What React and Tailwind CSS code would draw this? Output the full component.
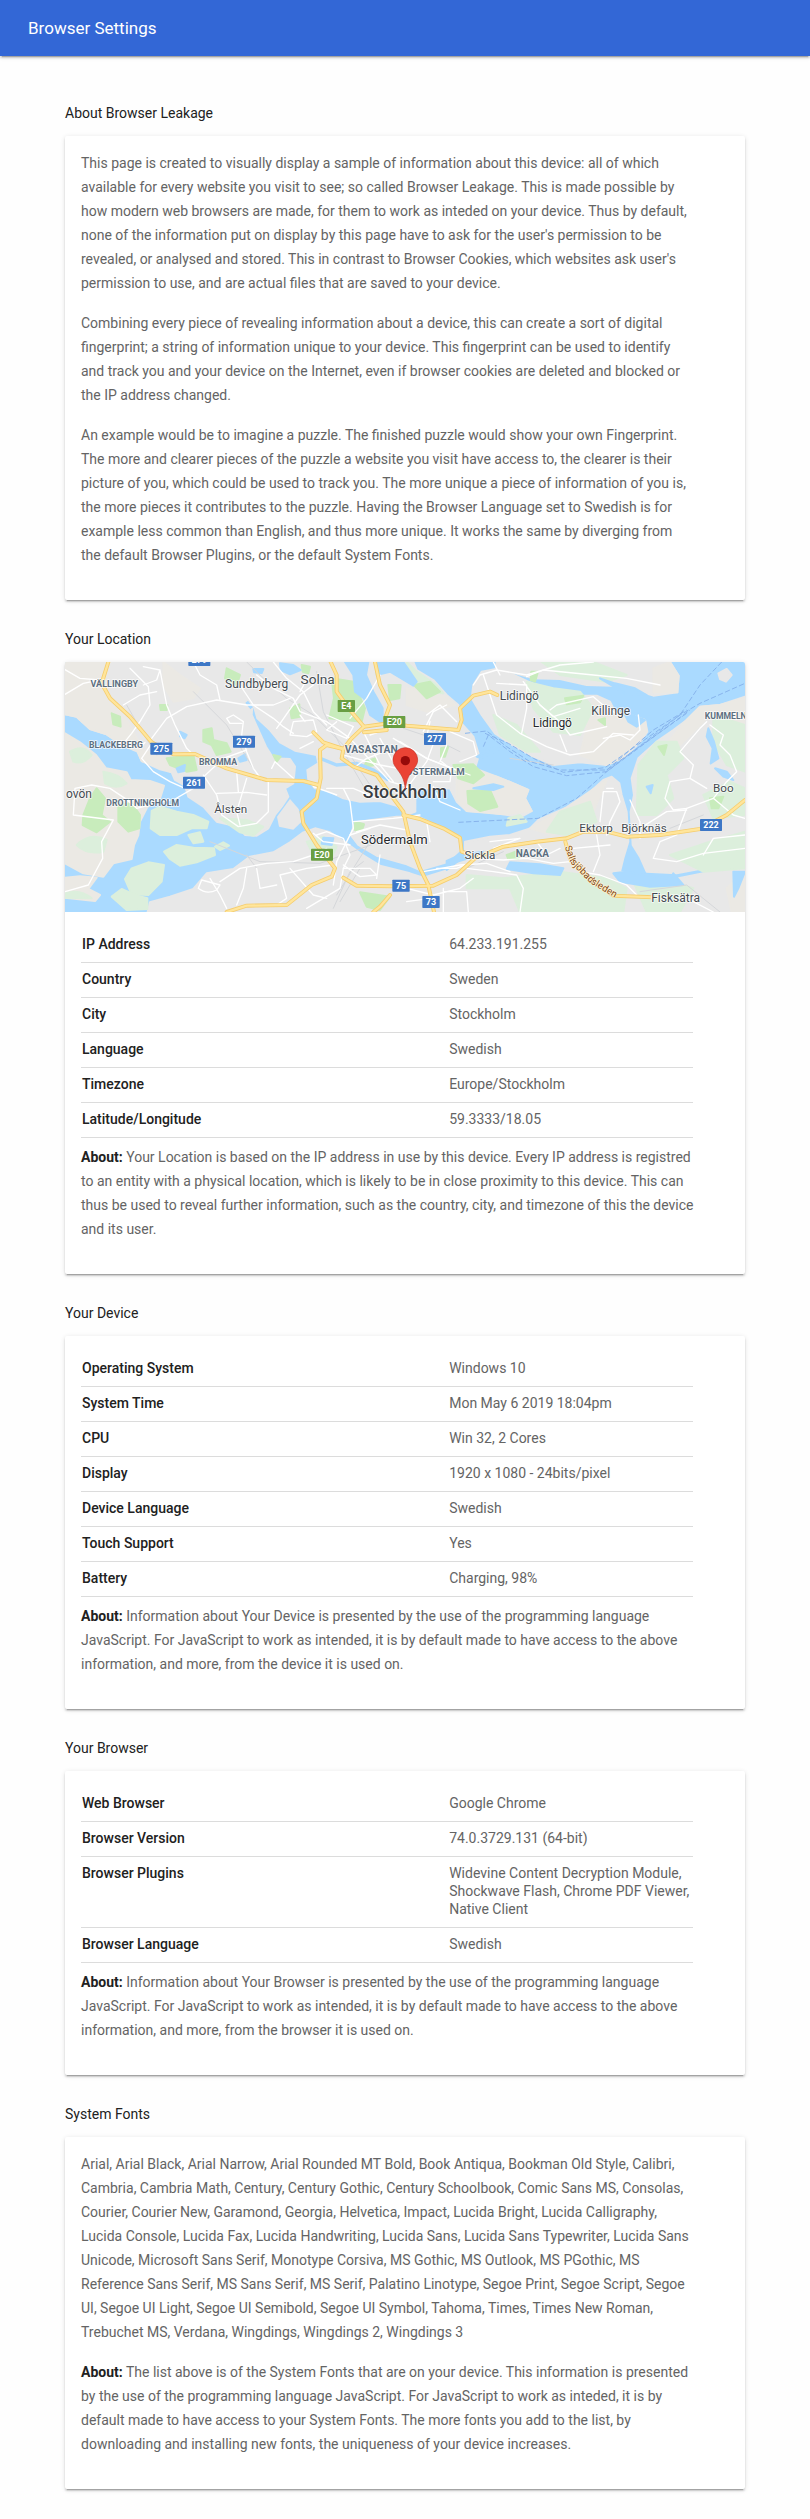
const LAND = [
  // northern mainland
  "M15,21 L1060,21 L1070,45 L1120,75 L1160,120 L1195,150 L1200,200 L1240,245 L1257,300 L1245,340 L1310,365 L1360,385 L1405,405 L1395,430 L1415,468 L1380,487 L1330,478 L1280,472 L1220,468 L1190,440 L1170,400 L1135,402 L1080,398 L1066,425 L1066,470 L1040,480 L1010,452 L960,438 L900,440 L850,430 L800,405 L765,400 L745,375 L742,345 L775,325 L770,300 L705,287 L660,262 L630,225 L592,190 L578,140 L575,180 L600,235 L618,275 L640,310 L690,312 L705,335 L700,385 L675,400 L685,425 L665,455 L645,480 L625,520 L590,542 L555,540 L535,515 L470,500 L430,455 L385,425 L375,392 L345,375 L335,352 L300,343 L245,318 L232,290 L190,272 L140,238 L90,222 L50,185 L15,178Z",
  // Södermalm
  "M885,502 L1010,485 L1075,485 L1150,522 L1198,545 L1205,580 L1160,622 L1080,645 L1040,628 L950,602 L895,570 L872,540Z",
  // southern mainland
  "M263,771 L270,742 L330,725 L400,702 L440,655 L520,642 L570,605 L640,592 L690,562 L730,532 L765,520 L810,532 L860,565 L905,598 L960,632 L1050,655 L1090,668 L1165,645 L1215,612 L1215,560 L1290,545 L1350,540 L1410,520 L1435,495 L1520,457 L1580,420 L1630,375 L1655,365 L1678,385 L1685,420 L1700,470 L1705,560 L1690,610 L1680,650 L1740,665 L1830,675 L1930,655 L2055,640 L2055,771Z",
  // Boo
  "M2055,125 L1980,150 L1920,155 L1880,195 L1840,225 L1790,260 L1735,310 L1715,370 L1722,420 L1712,470 L1718,570 L1740,605 L1760,650 L1850,655 L1930,640 L2055,625Z",
  // Lidingö
  "M1265,50 L1240,90 L1235,130 L1265,180 L1305,235 L1360,272 L1410,300 L1480,330 L1560,322 L1640,330 L1690,308 L1740,262 L1762,230 L1755,195 L1712,180 L1665,170 L1650,140 L1610,122 L1540,122 L1450,100 L1400,78 L1320,40Z",
  "M1310,21 L1830,21 L1856,62 L1852,112 L1780,122 L1720,104 L1660,92 L1580,90 L1500,72 L1420,70 L1350,50 L1305,60Z",
  "M1975,55 L2000,42 L2015,60 L1998,80 L1980,72Z",
];

const ISLANDS = [
  "M15,235 L60,262 L108,300 L138,340 L200,352 L212,375 L270,378 L312,392 L300,430 L262,456 L240,500 L235,540 L222,570 L215,612 L160,625 L130,665 L70,655 L15,625Z",
  "M15,668 L60,664 L110,668 L85,702 L120,720 L105,738 L15,728Z",
];

const GREEN_ISLES = [
  "M275,468 L300,455 L350,470 L400,480 L445,500 L440,520 L395,520 L350,540 L300,540 L272,520Z",
  "M312,590 L350,570 L400,578 L462,580 L465,600 L410,622 L360,632 L330,612Z",
  "M195,672 L215,640 L265,622 L312,630 L305,680 L265,720 L215,718Z",
  "M155,725 L185,702 L225,720 L262,730 L262,762 L200,765Z",
  "M465,575 L490,562 L507,572 L480,585Z",
  "M385,540 L420,532 L430,560 L400,565Z",
  "M1345,490 L1380,480 L1400,500 L1340,512Z",
];

const BEIGE = [
  "M15,21 L150,21 L130,90 L170,150 L210,210 L240,270 L190,272 L140,238 L90,222 L50,185 L15,178Z",
  "M310,21 L360,60 L420,100 L400,130 L340,140 L310,90Z",
  "M230,280 L290,300 L350,330 L330,350 L245,318Z",
  "M1040,100 L1110,110 L1160,125 L1185,150 L1100,170 L1040,150Z",
  "M1190,330 L1310,365 L1360,385 L1405,405 L1395,430 L1415,468 L1330,478 L1220,468 L1190,430Z",
  "M1600,130 L1660,170 L1755,195 L1760,230 L1690,308 L1640,330 L1560,300 L1580,220Z",
  "M1780,40 L1830,21 L1856,62 L1852,112 L1780,112Z",
  "M1880,195 L1920,155 L1980,150 L2055,130 L2055,210 L1940,190 L1860,270 L1800,290Z",
  "M1410,520 L1520,457 L1640,375 L1600,470 L1480,540Z",
  "M2000,700 L2055,650 L2055,771 L2015,771Z",
];

const PALE = [
  "M50,570 Q90,530 140,555 L130,590 Q80,600 50,570Z",
  "M30,290 Q70,265 95,300 Q70,330 40,320Z",
  "M130,350 Q175,355 200,385 Q170,405 135,385Z",
  "M15,715 Q60,700 95,730 L15,728Z",
  "M480,490 L560,495 L610,515 L580,542 L540,532Z",
  "M740,560 L790,545 L830,575 L810,620 L760,600Z",
  "M1040,21 L1070,50 L1130,90 L1150,115 L1100,112 L1040,70Z",
  "M1400,80 L1480,100 L1560,110 L1600,160 L1560,240 L1480,230 L1420,160Z",
  "M1300,180 L1370,210 L1440,290 L1400,290 L1320,240Z",
  "M1445,21 L1600,21 L1700,60 L1640,80 L1500,60Z",
  "M1735,330 L1790,260 L1850,260 L1870,310 L1820,360 L1840,430 L1790,480 L1730,480Z",
  "M1960,180 L2055,210 L2055,350 L2000,330 L1960,260Z",
  "M1500,470 L1590,440 L1610,500 L1520,540 L1460,530Z",
  "M1220,660 L1330,670 L1500,650 L1640,670 L1700,700 L1690,771 L1380,771 L1350,700 L1220,700Z",
  "M1720,680 L1830,680 L1900,700 L1860,771 L1760,771Z",
  "M1830,600 L1950,560 L2055,530 L2055,640 L1930,650Z",
  "M1930,420 L2010,380 L2055,400 L2055,480 L1960,490Z",
];

const PARKS = [
  "M70,480 L90,430 L110,400 L135,430 L125,480 L150,500 L110,532 L68,510Z",
  "M175,450 L215,445 L240,480 L238,520 L205,530 L175,500Z",
  "M155,175 L180,185 L182,215 L160,208Z",
  "M430,225 L455,220 L460,255 L500,265 L512,290 L470,300 L455,270 L430,260Z",
  "M320,310 L400,300 L410,345 L380,350 L330,330Z",
  "M500,40 L540,60 L530,90 L495,70Z",
  "M690,160 L718,148 L720,185 L695,190Z",
  "M815,70 L880,80 L915,160 L905,200 L808,190 L822,130Z",
  "M985,90 L1022,90 L1018,130 L990,135Z",
  "M885,500 L912,508 L905,528 L885,525Z",
  "M900,712 L990,725 L960,765 L920,755Z",
  "M1062,90 L1110,80 L1140,110 L1100,130Z",
  "M1180,330 L1240,328 L1272,360 L1240,385 L1195,370Z",
  "M1222,408 L1290,405 L1312,455 L1260,468 L1225,445Z",
  "M1515,130 L1570,122 L1560,142 L1520,148Z",
  "M1414,50 L1434,50 L1425,80 L1412,75Z",
  "M1143,280 L1165,275 L1155,305 L1143,305Z",
  "M920,318 L948,310 L945,330 L912,335Z",
  "M1795,275 L1820,270 L1812,300Z",
  "M1950,430 L1990,425 L1975,460 L1955,460Z",
  "M1340,600 L1380,585 L1375,612 L1345,612Z",
  "M640,300 L662,305 L650,320Z",
  "M300,150 L322,150 L320,165 L302,165Z",
  "M725,30 L750,35 L745,55 L728,50Z",
  "M1615,195 L1635,190 L1635,210Z",
];

const WATER = [
  "M855,21 L925,21 L918,60 L940,110 L968,160 L968,205 L930,180 L912,130 L885,110 L880,60Z",
  "M950,21 L1030,21 L1070,80 L1060,92 L990,50 L950,60Z",
  "M660,25 L700,30 L722,45 L690,58 L662,45Z",
  "M580,42 L610,42 L605,54 L582,52Z",
  "M360,230 L380,240 L374,250 L360,244Z",
  "M535,310 L555,298 L560,315 L540,320Z",
  "M350,340 L375,330 L372,348 L355,352Z",
  "M790,548 L820,550 L815,570 L785,566Z",
  "M1350,622 L1440,628 L1510,640 L1500,660 L1420,655 L1340,642Z",
  "M1240,400 L1300,388 L1330,395 L1300,405Z",
  "M1160,618 L1200,600 L1270,590 L1260,600 L1190,620 L1160,645Z",
  "M1945,220 L1962,260 L1975,310 L1952,325 L1958,280 L1940,245Z",
  "M1965,340 L2000,350 L2020,375 L1990,365Z",
  "M1760,395 L1778,390 L1772,415Z",
  "M1620,70 L1665,85 L1725,100 L1760,120 L1700,118Z",
  "M2020,650 L2055,650 L2035,700 L2022,725Z",
  "M1660,655 L1700,650 L1830,672 L1840,655 L1870,690 L1770,695 L1680,680Z",
  "M1690,170 L1755,195 L1730,215 L1705,200Z",
  "M1250,305 L1300,278 L1320,282 L1262,310Z",
];

const STREETS = [
  "M15,118 L70,85 L120,75 M15,44 L60,70 L120,75 M210,40 L265,95 L270,150 L240,200 L215,235 L195,260",
  "M250,35 L300,45 L320,150 L345,210 L380,280 L400,300 M300,45 L290,75 L250,90 M190,150 L240,120 L290,110",
  "M275,250 L320,190 L380,155 L470,135 L560,150 L640,150 L690,130",
  "M400,21 L420,60 L470,90 L480,135 M540,90 L580,150 L640,190 L670,215 L700,235",
  "M500,190 L520,180 L550,200 L545,240 L560,290 L580,340 L605,375 M500,190 L510,205 L545,205",
  "M245,310 L275,265 M245,310 L280,350 L330,380 L375,400 L410,385 L490,310 L560,285",
  "M240,280 L255,262 M340,435 L400,400 M430,360 L470,420 L485,480 L535,515 L590,505 L625,470 L625,380",
  "M470,415 L560,412 L620,420 M535,410 L530,350 M540,510 L530,470 L560,370 M635,340 L645,320 L700,370",
  "M40,480 L45,400 L95,390 L150,400 L195,430 L230,460 L330,435 M40,480 L160,495 L125,560 L128,610 L85,690 L15,710",
  "M590,60 L640,100 L700,130 L720,170 L800,200 L870,250 M640,21 L680,70 L730,110 L760,170 L800,210",
  "M690,240 L700,200 L760,195 L770,230 L740,245 L690,240 M720,180 L735,200 M650,220 L720,120 L760,90",
  "M760,260 L720,280 M800,180 L880,215 L860,250 L800,225 L830,200 M745,65 L720,110",
  "M960,60 L920,130 L870,190 M910,230 L960,330 L1000,380 M870,250 L990,380 L1060,400",
  "M850,300 L960,330 L1040,345 M880,340 L920,310 L1000,280 M960,250 L1010,340 M1000,250 L1100,310 L1230,360",
  "M800,400 L880,400 L950,430 M850,400 L870,440 L880,520 L830,620 L820,690 M760,395 L830,420",
  "M880,500 L1000,490 L1080,480 M890,530 L960,510 L1040,525 M870,540 L930,520 M1100,500 L1110,560 M930,240 L1000,215 M1110,200 L1100,245",
  "M415,700 L425,675 L480,690 L470,705 Q440,720 415,700 M480,680 L540,640 L620,625 L700,620 L760,600 L800,580",
  "M560,640 L550,700 L530,750 M660,660 L680,730 L650,750 M660,660 L740,640 L820,630 M690,640 L760,720 L800,730",
  "M770,540 L800,530 L850,550 L870,600 L850,640 M760,535 L790,560 L870,570 M850,640 L930,640 L950,660 L900,665 L850,630",
  "M450,670 L480,720 L500,760 M590,640 L600,700 L650,690 M740,760 L840,700 L850,640",
  "M1100,180 L1140,150 L1190,200 M1160,150 L1120,170 L1090,230 M1020,260 L1100,310 L1200,350 M1040,400 L1100,320 L1130,240",
  "M1120,380 L1170,380 L1175,345 L1145,320 M1160,270 L1140,320 M1170,230 L1240,260 L1250,300 L1200,320",
  "M1120,395 L1140,440 L1200,465 M1240,90 L1260,60 L1310,45 L1400,60 L1500,30 L1600,21",
  "M1270,60 L1290,120 L1310,180 L1380,235 L1460,275 L1530,300 L1600,290 L1660,235 L1720,240",
  "M1310,85 L1400,90 L1400,160 L1385,235 M1390,80 L1440,150 L1500,200 L1530,240 L1640,215",
  "M1400,65 L1450,45 L1600,60 L1700,70 L1800,90 M1470,165 L1490,150 L1600,125 L1640,160 L1680,180 M1500,240 L1520,290",
  "M1630,250 L1680,240 L1710,255 L1740,225 L1735,180 M1300,21 L1320,60 M1440,150 L1480,185 L1560,160",
  "M1940,200 L1920,220 L1860,290 L1900,330 L1890,370 L1830,380 L1815,430 L1840,465 L1880,460 L1960,430",
  "M1950,210 L1990,240 L1980,270 L2010,300 L2030,350 L2000,380 L1960,430 L2020,480 L2055,490",
  "M1890,370 L1940,400 M1880,460 L1850,540 L1800,560 L1780,610 L1850,620 L1930,595 L2055,580",
  "M1710,435 L1740,500 L1740,550 M1620,500 L1630,410 L1670,410 L1680,440 L1650,500 L1640,540 M1660,400 L1640,400",
  "M1740,520 L1820,470 L1880,465 M1930,600 L1960,550 L2055,540 M1610,540 L1620,600 L1600,650 M1540,580 L1650,570",
  "M1240,610 L1330,615 L1400,610 L1480,625 L1530,620 L1560,650 L1620,660 L1700,690 L1730,720",
  "M1300,580 L1380,550 L1290,560 M1220,640 L1300,650 L1370,660 L1390,700 L1380,771 M1280,625 L1350,650",
  "M1040,700 L1120,720 L1200,700 L1240,670 M1150,700 L1150,771 M1150,710 L1220,710 L1225,771 M1040,740 L1110,730 M1130,640 L1190,640 L1240,620",
  "M1090,650 L1200,630 L1280,625 M960,600 L950,670 M1500,580 L1460,600 L1430,560 M1850,720 L1900,740 L1960,771",
];

const RAIL = [
  "M200,150 L240,220 L290,300 M560,21 L600,60 L680,130 L760,180 L850,270 L930,390",
  "M770,50 L790,170 L850,290 L920,410 M400,110 L500,210 L580,340 M450,560 L600,620 L780,625 L960,560",
  "M830,720 L880,640 L930,560 M840,740 L900,640 M820,760 L870,650 L910,620 M590,640 L560,600",
  "M1030,220 L1120,250 L1200,290 M1350,310 L1480,330 M1220,640 L1330,590 M1830,520 L1930,480 M1740,710 L1880,690 L1980,771",
];

const HIGHWAYS = [
  "M145,21 L125,85 L150,130 L210,185 L275,262 L340,298 L405,297 L500,340 L620,375 L730,378 L775,390",
  "M812,21 L830,60 L830,110 L870,165 L912,215 L875,250 L850,282 L845,310 L880,335 L950,360 L1000,430 L1030,470 L1050,560 L1080,640 L1105,690 L1122,771",
  "M945,21 L960,90 L990,150 L975,190 L980,225 L912,232",
  "M912,215 L985,205 L1040,212 L1195,225 L1205,195 L1200,160 L1240,122 L1290,110 L1312,120",
  "M850,282 L800,270 L780,285 L782,370 L770,430 L725,470 L730,505 L770,570 L825,640 L815,665 L755,690 L680,750 L560,752 L500,771",
  "M760,232 L790,262 L850,282",
  "M850,668 L890,692 L1000,694 L1120,692 L1190,660 L1245,610 L1330,575 L1430,560 L1520,550 L1570,530 L1640,530 L1700,545 L1800,540 L1920,522 L2000,480 L2055,435",
  "M1030,480 L1080,492 L1150,520 L1200,548 L1205,590 L1235,600",
  "M1516,560 L1530,610 L1590,670 L1660,722 L1780,727",
  "M990,720 L960,755 L940,771",
];

const FERRIES = [
  "M1215,235 L1280,228 L1340,275 L1410,320 L1500,345 L1640,345 L1880,175",
  "M1270,275 L1285,240 L1350,290 L1420,335 L1520,362 L1640,350 L1890,165",
  "M1275,235 L1345,265 L1420,310 L1510,352 L1635,338 L1860,180 L1920,90 L1985,21",
  "M1195,502 L1435,490 L1550,430 L1640,350 L1860,180 L1920,145 L2055,85",
  "M1640,345 L1780,225 L1880,165",
];

const PLACES = [
  { x: 163, y: 96, s: 27, t: "VÄLLINGBY", c: "district" },
  { x: 168, y: 279, s: 26, t: "BLACKEBERG", c: "district" },
  { x: 474, y: 330, s: 26, t: "BROMMA", c: "district" },
  { x: 248, y: 453, s: 26, t: "DROTTNINGHOLM", c: "district" },
  { x: 934, y: 295, s: 31, t: "VASASTAN", c: "district" },
  { x: 1126, y: 359, s: 29, t: "ÖSTERMALM", c: "district" },
  { x: 1417, y: 605, s: 30, t: "NACKA", c: "district" },
  { x: 2014, y: 192, s: 26, t: "KUMMELNÄS", c: "district" },
  { x: 590, y: 100, s: 36, t: "Sundbyberg", c: "town" },
  { x: 773, y: 86, s: 41, t: "Solna", c: "town" },
  { x: 57, y: 429, s: 36, t: "ovön", c: "town" },
  { x: 512, y: 474, s: 35, t: "Ålsten", c: "town" },
  { x: 1378, y: 135, s: 36, t: "Lidingö", c: "town" },
  { x: 1477, y: 216, s: 36, t: "Lidingö", c: "dark" },
  { x: 1652, y: 181, s: 36, t: "Killinge", c: "town" },
  { x: 1990, y: 411, s: 35, t: "Boo", c: "town" },
  { x: 1608, y: 531, s: 35, t: "Ektorp", c: "town" },
  { x: 1752, y: 531, s: 35, t: "Björknäs", c: "town" },
  { x: 1260, y: 612, s: 35, t: "Sickla", c: "town" },
  { x: 1847, y: 741, s: 36, t: "Fisksätra", c: "town" },
  { x: 1003, y: 568, s: 39, t: "Södermalm", c: "dark" },
  { x: 1035, y: 429, s: 53, t: "Stockholm", c: "city" },
];

const PLACE_STYLE = {
  district: "fill-[#5d6f80] font-bold",
  town: "fill-[#444a50]",
  dark: "fill-[#26282b]",
  city: "fill-[#3a3d42] font-medium",
};

const SHIELDS = [
  { x: 418, y: 15, t: "279" },
  { x: 552, y: 260, t: "279" },
  { x: 304, y: 281, t: "275" },
  { x: 402, y: 383, t: "261" },
  { x: 1125, y: 252, t: "277" },
  { x: 1953, y: 510, t: "222" },
  { x: 1023, y: 692, t: "75", w: 52 },
  { x: 1113, y: 741, t: "73", w: 52 },
  { x: 859, y: 153, t: "E4", w: 52, green: true },
  { x: 1003, y: 201, t: "E20", green: true },
  { x: 786, y: 599, t: "E20", green: true },
];

function Shapes({ list, fill }) {
  return list.map((d) => <path key={d} d={d} fill={fill} stroke={fill} strokeWidth="6" strokeLinejoin="round" />);
}

function Lines({ list, color, width, dash }) {
  return list.map((d) => (
    <path key={d} d={d} fill="none" stroke={color} strokeWidth={width} strokeDasharray={dash} strokeLinejoin="round" strokeLinecap={dash ? "butt" : "round"} />
  ));
}

function StockholmMap() {
  return (
    <svg
      role="img"
      aria-label="Map of Stockholm"
      viewBox="15 21 2040 750"
      preserveAspectRatio="xMidYMid slice"
      className="block h-[250px] w-full rounded-t-[2px] bg-[#aadaff]"
    >
      <Shapes list={LAND} fill="#e8e8e8" />
      <Shapes list={ISLANDS} fill="#ebe9e4" />
      <Shapes list={BEIGE} fill="#ebe9e4" />
      <Shapes list={GREEN_ISLES} fill="#dcefdc" />
      <Shapes list={PALE} fill="#dcefdc" />
      <path d="M690,432 L716,462 L725,500 L700,524 L657,515 L651,485Z" fill="#e8e8e8" />
      <Shapes list={PARKS} fill="#c8ecbc" />
      <Shapes list={WATER} fill="#aadaff" />
      <path d="M775,308 L830,330 L890,325 L940,345 L985,375 M560,140 L575,160" fill="none" stroke="#aadaff" strokeWidth="10" />
      <Lines list={RAIL} color="#d5d7da" width="3" />
      <Lines list={STREETS} color="#ffffff" width="4" />
      <Lines list={FERRIES} color="#88b4ec" width="3" dash="16 7" />
      <Lines list={HIGHWAYS} color="#f5cd6e" width="12" />
      <Lines list={HIGHWAYS} color="#ffe59b" width="7" />
      {PLACES.map((p) => (
        <text
          key={p.t + p.x}
          x={p.x}
          y={p.y}
          fontSize={p.s}
          textAnchor="middle"
          stroke="#ffffff"
          strokeOpacity="0.8"
          strokeWidth="5"
          strokeLinejoin="round"
          paintOrder="stroke"
          className={PLACE_STYLE[p.c]}
        >
          {p.t}
        </text>
      ))}
      <path id="saltsjobadsleden" d="M1514,576 L1532,624 L1590,684 L1674,734" fill="none" />
      <text fontSize="29" fill="#7d430f" stroke="#fff3d6" strokeWidth="4" paintOrder="stroke" strokeLinejoin="round">
        <textPath href="#saltsjobadsleden">Saltsjöbadsleden</textPath>
      </text>
      {SHIELDS.map((s) => {
        const w = s.w || 66;
        return (
          <g key={s.t + s.x}>
            <rect x={s.x - w / 2} y={s.y - 18} width={w} height="36" rx="2" fill={s.green ? "#699f43" : "#3d77c6"} />
            <text x={s.x} y={s.y + 10} fontSize="27" textAnchor="middle" fill="#ffffff" className="font-bold">
              {s.t}
            </text>
          </g>
        );
      })}
      <path
        d="M1036,403 C1032,368 1024,360 1011,342 C1003,331 999,325 999,315 A37,37 0 0 1 1073,315 C1073,325 1069,331 1061,342 C1048,360 1040,368 1036,403Z"
        fill="#ea4335"
        stroke="#c5352a"
        strokeWidth="2"
      />
      <circle cx="1036" cy="317" r="14" fill="#960a0a" />
    </svg>
  );
}

function Section({ title, media, children }) {
  return (
    <section>
      <h2 className="pt-7 pb-3 text-sm leading-[22px] text-[#212121]">{title}</h2>
      <div className="rounded-[2px] bg-white shadow-[0_2px_2px_0_rgba(0,0,0,0.14),0_1px_5px_0_rgba(0,0,0,0.12),0_3px_1px_-2px_rgba(0,0,0,0.2)]">
        {media}
        <div className="ml-4 w-[90%] pt-[15px] pb-[33px]">{children}</div>
      </div>
    </section>
  );
}

function InfoTable({ rows }) {
  return (
    <table className="mt-px mb-[7px] w-full table-fixed border-collapse text-sm leading-[18px]">
      <tbody>
        {rows.map(([label, value]) => (
          <tr key={label} className="border-b border-[#dcdcdc] align-top">
            <th scope="row" className="w-3/5 px-px pt-[7px] pb-[9px] text-left font-medium text-[#212121]">
              {label}
            </th>
            <td className="px-px pt-[7px] pb-[9px]">{value}</td>
          </tr>
        ))}
      </tbody>
    </table>
  );
}

function About({ children }) {
  return (
    <p className="-mr-1">
      <strong className="font-bold text-[#212121]">About:</strong> {children}
    </p>
  );
}

const LOCATION = [
  ["IP Address", "64.233.191.255"],
  ["Country", "Sweden"],
  ["City", "Stockholm"],
  ["Language", "Swedish"],
  ["Timezone", "Europe/Stockholm"],
  ["Latitude/Longitude", "59.3333/18.05"],
];

const DEVICE = [
  ["Operating System", "Windows 10"],
  ["System Time", "Mon May 6 2019 18:04pm"],
  ["CPU", "Win 32, 2 Cores"],
  ["Display", "1920 x 1080 - 24bits/pixel"],
  ["Device Language", "Swedish"],
  ["Touch Support", "Yes"],
  ["Battery", "Charging, 98%"],
];

const BROWSER = [
  ["Web Browser", "Google Chrome"],
  ["Browser Version", "74.0.3729.131 (64-bit)"],
  ["Browser Plugins", "Widevine Content Decryption Module, Shockwave Flash, Chrome PDF Viewer, Native Client"],
  ["Browser Language", "Swedish"],
];

export default function App() {
  return (
    <div className="bg-[#fefefe] font-[Roboto,sans-serif] text-sm leading-6 text-[#646464]">
      <header className="flex h-14 items-center bg-[#3367d6] px-7 shadow-[0_2px_2px_0_rgba(0,0,0,0.14),0_1px_5px_0_rgba(0,0,0,0.12),0_3px_1px_-2px_rgba(0,0,0,0.2)]">
        <h1 className="text-[17px] leading-6 font-normal text-white">Browser Settings</h1>
      </header>
      <main className="mx-auto w-full max-w-[712px] px-4 pt-[18px] pb-[30px]">
        <Section title="About Browser Leakage">
          <div className="space-y-4">
            <p>
              This page is created to visually display a sample of information about this device: all of which available
              for every website you visit to see; so called Browser Leakage. This is made possible by how modern web
              browsers are made, for them to work as inteded on your device. Thus by default, none of the information put
              on display by this page have to ask for the user's permission to be revealed, or analysed and stored. This
              in contrast to Browser Cookies, which websites ask user's permission to use, and are actual files that are
              saved to your device.
            </p>
            <p>
              Combining every piece of revealing information about a device, this can create a sort of digital
              fingerprint; a string of information unique to your device. This fingerprint can be used to identify and
              track you and your device on the Internet, even if browser cookies are deleted and blocked or the IP address
              changed.
            </p>
            <p>
              An example would be to imagine a puzzle. The finished puzzle would show your own Fingerprint. The more and
              clearer pieces of the puzzle a website you visit have access to, the clearer is their picture of you, which
              could be used to track you. The more unique a piece of information of you is, the more pieces it contributes
              to the puzzle. Having the Browser Language set to Swedish is for example less common than English, and thus
              more unique. It works the same by diverging from the default Browser Plugins, or the default System Fonts.
            </p>
          </div>
        </Section>
        <Section title="Your Location" media={<StockholmMap />}>
          <InfoTable rows={LOCATION} />
          <About>
            Your Location is based on the IP address in use by this device. Every IP address is registred to an entity
            with a physical location, which is likely to be in close proximity to this device. This can thus be used to
            reveal further information, such as the country, city, and timezone of this the device and its user.
          </About>
        </Section>
        <Section title="Your Device">
          <InfoTable rows={DEVICE} />
          <About>
            Information about Your Device is presented by the use of the programming language JavaScript. For JavaScript
            to work as intended, it is by default made to have access to the above information, and more, from the device
            it is used on.
          </About>
        </Section>
        <Section title="Your Browser">
          <InfoTable rows={BROWSER} />
          <About>
            Information about Your Browser is presented by the use of the programming language JavaScript. For JavaScript
            to work as intended, it is by default made to have access to the above information, and more, from the
            browser it is used on.
          </About>
        </Section>
        <Section title="System Fonts">
          <div className="space-y-4">
            <p>
              Arial, Arial Black, Arial Narrow, Arial Rounded MT Bold, Book Antiqua, Bookman Old Style, Calibri, Cambria,
              Cambria Math, Century, Century Gothic, Century Schoolbook, Comic Sans MS, Consolas, Courier, Courier New,
              Garamond, Georgia, Helvetica, Impact, Lucida Bright, Lucida Calligraphy, Lucida Console, Lucida Fax, Lucida
              Handwriting, Lucida Sans, Lucida Sans Typewriter, Lucida Sans Unicode, Microsoft Sans Serif, Monotype
              Corsiva, MS Gothic, MS Outlook, MS PGothic, MS Reference Sans Serif, MS Sans Serif, MS Serif, Palatino
              Linotype, Segoe Print, Segoe Script, Segoe UI, Segoe UI Light, Segoe UI Semibold, Segoe UI Symbol, Tahoma,
              Times, Times New Roman, Trebuchet MS, Verdana, Wingdings, Wingdings 2, Wingdings 3
            </p>
            <About>
              The list above is of the System Fonts that are on your device. This information is presented by the use of
              the programming language JavaScript. For JavaScript to work as inteded, it is by default made to have access
              to your System Fonts. The more fonts you add to the list, by downloading and installing new fonts, the
              uniqueness of your device increases.
            </About>
          </div>
        </Section>
      </main>
    </div>
  );
}
